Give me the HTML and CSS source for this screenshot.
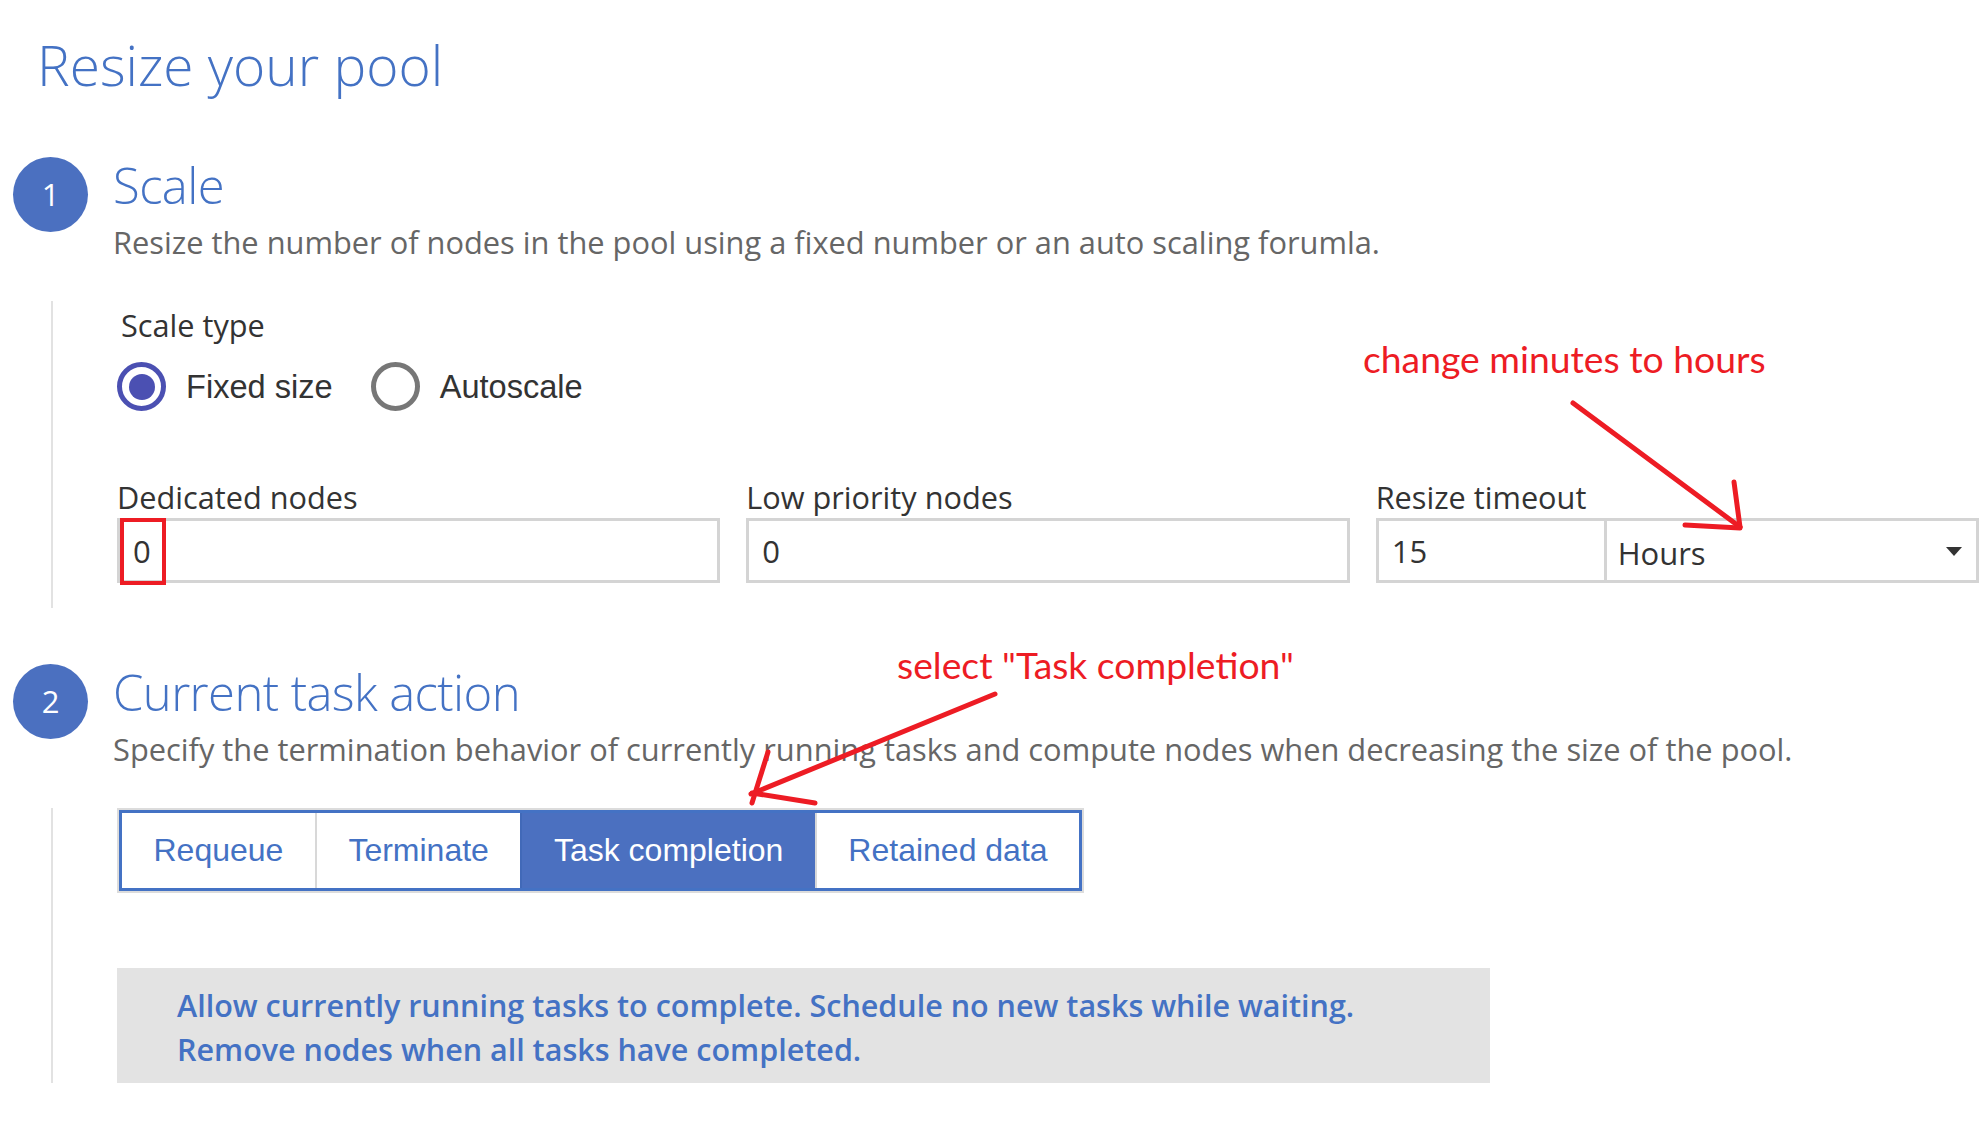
FILE: index.html
```html
<!DOCTYPE html>
<html lang="en">
<head>
<meta charset="utf-8">
<title>Resize your pool</title>
<link rel="stylesheet" href="styles.css">
</head>
<body>
<main class="page">
  <h1 class="title">Resize your pool</h1>

  <section class="step step-first">
    <header class="step-head">
      <span class="badge">1</span>
      <div class="step-titles">
        <h2 class="step-title">Scale</h2>
        <p class="step-desc">Resize the number of nodes in the pool using a fixed number or an auto scaling forumla.</p>
      </div>
    </header>
    <div class="step-body step-body-scale">
      <div class="field-label field-label-indent">Scale type</div>
      <div class="radio-row">
        <label class="radio"><span class="radio-dot is-checked"></span><span class="radio-text">Fixed size</span></label>
        <label class="radio"><span class="radio-dot"></span><span class="radio-text">Autoscale</span></label>
      </div>
      <div class="fields">
        <div class="field">
          <div class="field-label">Dedicated nodes</div>
          <div class="input"><span class="input-value">0</span><span class="highlight"></span></div>
        </div>
        <div class="field">
          <div class="field-label">Low priority nodes</div>
          <div class="input"><span class="input-value">0</span></div>
        </div>
        <div class="field">
          <div class="field-label">Resize timeout</div>
          <div class="combo">
            <div class="combo-num"><span class="input-value">15</span></div>
            <div class="combo-select"><span class="select-value">Hours</span><span class="caret"></span></div>
          </div>
        </div>
      </div>
    </div>
  </section>

  <section class="step step-second">
    <header class="step-head">
      <span class="badge">2</span>
      <div class="step-titles">
        <h2 class="step-title">Current task action</h2>
        <p class="step-desc">Specify the termination behavior of currently running tasks and compute nodes when decreasing the size of the pool.</p>
      </div>
    </header>
    <div class="step-body step-body-action">
      <div class="segmented-wrap">
        <div class="segmented">
          <span class="seg">Requeue</span>
          <span class="seg">Terminate</span>
          <span class="seg seg-active">Task completion</span>
          <span class="seg">Retained data</span>
        </div>
      </div>
      <div class="info">Allow currently running tasks to complete. Schedule no new tasks while waiting.<br>Remove nodes when all tasks have completed.</div>
    </div>
  </section>

  <div class="note note-hours">change minutes to hours</div>
  <div class="note note-task">select "Task completion"</div>

  <svg class="arrows" width="1987" height="1126" viewBox="0 0 1987 1126" aria-hidden="true">
    <g fill="none" stroke="#ed1c24" stroke-width="5" stroke-linecap="round" stroke-linejoin="round">
      <path d="M1573 403 L1740 527"/>
      <path d="M1734 482 L1740 527"/>
      <path d="M1685 525 L1740 528"/>
      <path d="M995 694 L751 794"/>
      <path d="M768 752 L752 803"/>
      <path d="M752 793 L815 803"/>
    </g>
  </svg>
</main>
</body>
</html>
```

FILE: styles.css
```css
html, body {
  margin: 0;
  padding: 0;
  background: #ffffff;
}

.page {
  position: relative;
  width: 1987px;
  height: 1126px;
  overflow: hidden;
  box-sizing: border-box;
  padding: 0 8px 0 0;
  font-family: "Open Sans", "Noto Sans", sans-serif;
  color: #333333;
}

.title {
  margin: 33px 0 0 37px;
  font-size: 55px;
  line-height: 64px;
  font-weight: 300;
  color: #4472c4;
}

.step-first .step-head {
  margin-top: 60px;
}

.step-second .step-head {
  margin-top: 56px;
}

.step-head {
  display: flex;
  align-items: flex-start;
}

.badge {
  flex: none;
  width: 75px;
  height: 75px;
  margin-left: 13px;
  border-radius: 50%;
  background: #4b70c0;
  color: #ffffff;
  font-size: 31px;
  line-height: 75px;
  text-align: center;
}

.step-titles {
  margin-left: 25px;
}

.step-title {
  margin: 0;
  font-size: 49px;
  line-height: 56px;
  font-weight: 300;
  letter-spacing: -0.6px;
  color: #4472c4;
}

.step-desc {
  margin: 9px 0 0;
  font-size: 30.8px;
  line-height: 40px;
  color: #666666;
}

.step-body {
  margin: 39px 0 0 51px;
  border-left: 2px solid #e2e2e2;
  padding-left: 64px;
}

.step-body-scale {
  padding-top: 4px;
  padding-bottom: 25px;
}

.field-label {
  font-size: 30.7px;
  line-height: 40px;
  color: #333333;
}

.field-label-indent {
  margin-left: 4px;
}

.radio-row {
  display: flex;
  gap: 38px;
  margin-top: 17px;
  height: 49px;
}

.radio {
  display: flex;
  align-items: center;
  gap: 20px;
  font-family: "Liberation Sans", Arial, sans-serif;
  font-size: 32.6px;
  line-height: 49px;
  color: #333333;
}

.radio-dot {
  position: relative;
  width: 49px;
  height: 49px;
  box-sizing: border-box;
  border: 5px solid #777777;
  border-radius: 50%;
  background: #ffffff;
}

.radio-dot.is-checked {
  border-color: #4b50b2;
}

.radio-dot.is-checked::after {
  content: "";
  position: absolute;
  left: 6.5px;
  top: 6.5px;
  width: 26px;
  height: 26px;
  border-radius: 50%;
  background: #4b50b2;
}

.fields {
  display: grid;
  grid-template-columns: 1fr 1fr 1fr;
  column-gap: 26px;
  margin-top: 66px;
}

.input,
.combo {
  position: relative;
  margin-top: 1px;
  height: 65px;
  box-sizing: border-box;
  border: 3px solid #d4d4d4;
  background: #ffffff;
}

.input {
  padding-left: 13px;
}

.input-value {
  font-size: 31px;
  line-height: 60px;
  color: #333333;
}

.highlight {
  position: absolute;
  left: 0;
  top: -3px;
  width: 46px;
  height: 67px;
  box-sizing: border-box;
  border: 4px solid #ed1c24;
}

.combo {
  display: flex;
}

.combo-num {
  flex: none;
  width: 228px;
  box-sizing: border-box;
  border-right: 3px solid #d4d4d4;
  padding-left: 13px;
}

.combo-select {
  flex: 1;
  display: flex;
  align-items: center;
  justify-content: space-between;
  padding: 5px 14px 0 11px;
}

.select-value {
  font-size: 31px;
  line-height: 54px;
  color: #333333;
}

.caret {
  width: 0;
  height: 0;
  margin-top: -4px;
  border-left: 8.5px solid transparent;
  border-right: 8.5px solid transparent;
  border-top: 9px solid #333333;
}

.step-body-action {
  padding-top: 0;
  padding-bottom: 0;
}

.segmented-wrap {
  display: inline-block;
  border: 2px solid #dcdcdc;
  vertical-align: top;
}

.segmented {
  display: flex;
  border: 3px solid #4472c4;
}

.seg {
  padding: 0 31.5px;
  font-family: "Liberation Sans", Arial, sans-serif;
  font-size: 32px;
  line-height: 75px;
  color: #4472c4;
  background: #ffffff;
  border-left: 2px solid #d8d8d8;
}

.seg:first-child {
  border-left: none;
}

.seg-active {
  background: #4b70c0;
  color: #ffffff;
  border-left-color: #4169b8;
}

.info {
  width: 1373px;
  box-sizing: border-box;
  margin-top: 75px;
  padding: 15px 0 12px 60px;
  background: #e3e3e3;
  font-size: 30.5px;
  line-height: 44px;
  font-weight: 600;
  color: #4472c4;
}

.note {
  position: absolute;
  font-family: Lato, "Open Sans", sans-serif;
  font-size: 37.3px;
  line-height: 38px;
  color: #ed1c24;
  white-space: nowrap;
}

.note-hours {
  left: 1363px;
  top: 340px;
}

.note-task {
  left: 897px;
  top: 646px;
}

.arrows {
  position: absolute;
  left: 0;
  top: 0;
  pointer-events: none;
}
```
